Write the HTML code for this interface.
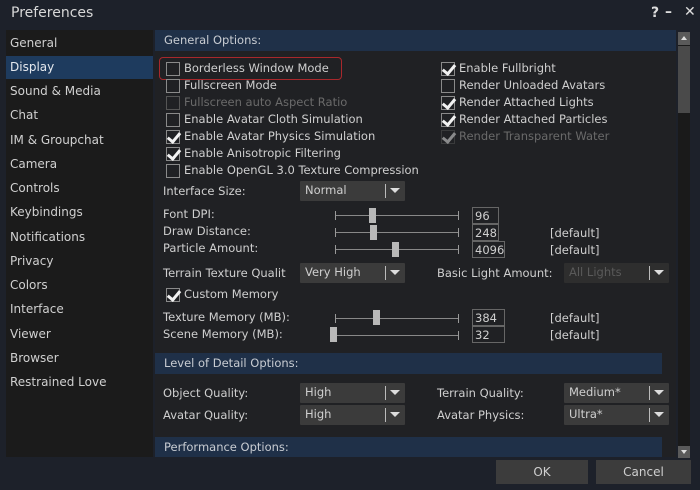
<!DOCTYPE html>
<html><head><style>
*{margin:0;padding:0;box-sizing:border-box}
body{width:700px;height:490px;background:#1d212a;font-family:"DejaVu Sans","Liberation Sans",sans-serif;font-size:11.5px;color:#cfcfcf;position:relative;overflow:hidden}
.a{position:absolute;white-space:nowrap}
.side{left:6px;top:30px;width:147px;height:427px;background:#1b1b1b}
.si{left:10px;font-size:12px;color:#d0d0d0}
.content{left:155px;top:30px;width:521px;height:427px;background:#202124}
.hdr{background:#1f3048;height:21px;color:#c8ccd2;padding:3px 0 0 9px;font-size:11.5px}
.cb{width:14px;height:14px;border:1px solid #8a8a8a;background:#202124}
.ck::after{content:"";position:absolute;left:3px;top:-1px;width:5px;height:10px;border:solid #f2f2f2;border-width:0 3px 3px 0;transform:rotate(40deg)}
.dis{color:#6a6a6a}
.dis.cb,.cb.dis{border-color:#555}
.dd{height:20px;background:#3b3b3b;color:#cfcfcf;padding:2px 0 0 5px;border-radius:1px}
.dd::after{content:"";position:absolute;right:5px;top:7px;border:5px solid transparent;border-top:5px solid #ddd;border-bottom:0}
.dd::before{content:"";position:absolute;right:19px;top:3px;width:1px;height:14px;background:#bbb}
.sl{height:1px;background:#888}
.tk{width:1px;height:9px;background:#999}
.kn{width:7px;height:15px;background:#b8b8b8}
.vb{height:17px;border:1px solid #666;padding:1px 0 0 2px;color:#cfcfcf}
.btn{height:24px;background:#3c3c3c;color:#cfcfcf;text-align:center;padding-top:5px;font-size:12px}
</style></head><body>
<div class="a" style="left:11px;top:5px;font-size:14px;color:#d8d8d8">Preferences</div>
<div class="a" style="left:651px;top:5px;font-size:14px;font-weight:bold;color:#ddd">?</div>
<div class="a" style="left:665px;top:4px;font-size:14px;font-weight:bold;color:#ddd">–</div>
<div class="a" style="left:684px;top:4px;font-size:14px;color:#ddd">✕</div>

<div class="a side"></div>
<div class="a" style="left:6px;top:56px;width:147px;height:23px;background:#1e3b5e"></div>
<div class="a si" style="top:36px">General</div>
<div class="a si" style="top:60px;color:#e4e8ee">Display</div>
<div class="a si" style="top:84px">Sound &amp; Media</div>
<div class="a si" style="top:108px">Chat</div>
<div class="a si" style="top:133px">IM &amp; Groupchat</div>
<div class="a si" style="top:157px">Camera</div>
<div class="a si" style="top:181px">Controls</div>
<div class="a si" style="top:205px">Keybindings</div>
<div class="a si" style="top:230px">Notifications</div>
<div class="a si" style="top:254px">Privacy</div>
<div class="a si" style="top:278px">Colors</div>
<div class="a si" style="top:302px">Interface</div>
<div class="a si" style="top:327px">Viewer</div>
<div class="a si" style="top:351px">Browser</div>
<div class="a si" style="top:375px">Restrained Love</div>

<div class="a content"></div>
<div class="a hdr" style="left:155px;top:30px;width:521px">General Options:</div>
<div class="a" style="left:159px;top:57px;width:183px;height:23px;border:1.5px solid #a8282c;border-radius:4px"></div>

<div class="a cb" style="left:166px;top:62px"></div><div class="a" style="left:184px;top:61px">Borderless Window Mode</div>
<div class="a cb" style="left:166px;top:79px"></div><div class="a" style="left:184px;top:78px">Fullscreen Mode</div>
<div class="a cb dis" style="left:166px;top:96px"></div><div class="a dis" style="left:184px;top:95px">Fullscreen auto Aspect Ratio</div>
<div class="a cb" style="left:166px;top:113px"></div><div class="a" style="left:184px;top:112px">Enable Avatar Cloth Simulation</div>
<div class="a cb ck" style="left:166px;top:130px"></div><div class="a" style="left:184px;top:129px">Enable Avatar Physics Simulation</div>
<div class="a cb ck" style="left:166px;top:147px"></div><div class="a" style="left:184px;top:146px">Enable Anisotropic Filtering</div>
<div class="a cb" style="left:166px;top:164px"></div><div class="a" style="left:184px;top:163px">Enable OpenGL 3.0 Texture Compression</div>

<div class="a cb ck" style="left:441px;top:62px"></div><div class="a" style="left:459px;top:61px">Enable Fullbright</div>
<div class="a cb" style="left:441px;top:79px"></div><div class="a" style="left:459px;top:78px">Render Unloaded Avatars</div>
<div class="a cb ck" style="left:441px;top:96px"></div><div class="a" style="left:459px;top:95px">Render Attached Lights</div>
<div class="a cb ck" style="left:441px;top:113px"></div><div class="a" style="left:459px;top:112px">Render Attached Particles</div>
<div class="a cb ck dis" style="left:441px;top:130px;opacity:.5"></div><div class="a dis" style="left:459px;top:129px">Render Transparent Water</div>

<div class="a" style="left:163px;top:184px">Interface Size:</div>
<div class="a dd" style="left:300px;top:181px;width:105px">Normal</div>

<div class="a" style="left:163px;top:207px">Font DPI:</div>
<div class="a" style="left:163px;top:224px">Draw Distance:</div>
<div class="a" style="left:163px;top:241px">Particle Amount:</div>
<div class="a sl" style="left:335px;top:215px;width:124px"></div><div class="a tk" style="left:335px;top:211px"></div><div class="a tk" style="left:458px;top:211px"></div><div class="a kn" style="left:369px;top:208px"></div>
<div class="a sl" style="left:335px;top:232px;width:124px"></div><div class="a tk" style="left:335px;top:228px"></div><div class="a tk" style="left:458px;top:228px"></div><div class="a kn" style="left:370px;top:225px"></div>
<div class="a sl" style="left:335px;top:249px;width:124px"></div><div class="a tk" style="left:335px;top:245px"></div><div class="a tk" style="left:458px;top:245px"></div><div class="a kn" style="left:392px;top:242px"></div>
<div class="a vb" style="left:472px;top:207px;width:27px">96</div>
<div class="a vb" style="left:472px;top:224px;width:27px">248</div>
<div class="a vb" style="left:472px;top:241px;width:33px">4096</div>
<div class="a" style="left:550px;top:226px">[default]</div>
<div class="a" style="left:550px;top:243px">[default]</div>

<div class="a" style="left:163px;top:266px">Terrain Texture Qualit</div>
<div class="a dd" style="left:300px;top:263px;width:105px">Very High</div>
<div class="a" style="left:437px;top:266px">Basic Light Amount:</div>
<div class="a dd dis" style="left:564px;top:263px;width:105px;background:#2e2e2e;color:#5a5a5a">All Lights</div>
<div class="a cb ck" style="left:166px;top:288px"></div><div class="a" style="left:184px;top:287px">Custom Memory</div>

<div class="a" style="left:163px;top:310px">Texture Memory (MB):</div>
<div class="a" style="left:163px;top:327px">Scene Memory (MB):</div>
<div class="a sl" style="left:335px;top:318px;width:124px"></div><div class="a tk" style="left:335px;top:314px"></div><div class="a tk" style="left:458px;top:314px"></div><div class="a kn" style="left:373px;top:310px"></div>
<div class="a sl" style="left:335px;top:335px;width:124px"></div><div class="a tk" style="left:458px;top:331px"></div><div class="a kn" style="left:330px;top:327px"></div>
<div class="a vb" style="left:472px;top:309px;width:33px">384</div>
<div class="a vb" style="left:472px;top:326px;width:33px">32</div>
<div class="a" style="left:550px;top:311px">[default]</div>
<div class="a" style="left:550px;top:328px">[default]</div>

<div class="a hdr" style="left:155px;top:353px;width:507px">Level of Detail Options:</div>
<div class="a" style="left:163px;top:386px">Object Quality:</div>
<div class="a dd" style="left:300px;top:383px;width:105px">High</div>
<div class="a" style="left:437px;top:386px">Terrain Quality:</div>
<div class="a dd" style="left:564px;top:383px;width:105px">Medium*</div>
<div class="a" style="left:163px;top:408px">Avatar Quality:</div>
<div class="a dd" style="left:300px;top:405px;width:105px">High</div>
<div class="a" style="left:437px;top:408px">Avatar Physics:</div>
<div class="a dd" style="left:564px;top:405px;width:105px">Ultra*</div>
<div class="a hdr" style="left:155px;top:437px;width:507px;height:20px">Performance Options:</div>

<div class="a" style="left:678px;top:32px;width:12px;height:425px;background:#1a1a1a"></div>
<div class="a" style="left:678px;top:32px;width:12px;height:13px;background:#5a5a5a"></div>
<div class="a" style="left:681px;top:36px;border:3px solid transparent;border-bottom:4px solid #ddd;border-top:0"></div>
<div class="a" style="left:678px;top:46px;width:12px;height:67px;background:#4a4a4a"></div>
<div class="a" style="left:678px;top:446px;width:12px;height:12px;background:#5a5a5a"></div>
<div class="a" style="left:681px;top:450px;border:3px solid transparent;border-top:4px solid #ddd;border-bottom:0"></div>

<div class="a btn" style="left:496px;top:460px;width:92px">OK</div>
<div class="a btn" style="left:596px;top:460px;width:95px">Cancel</div>
</body></html>
